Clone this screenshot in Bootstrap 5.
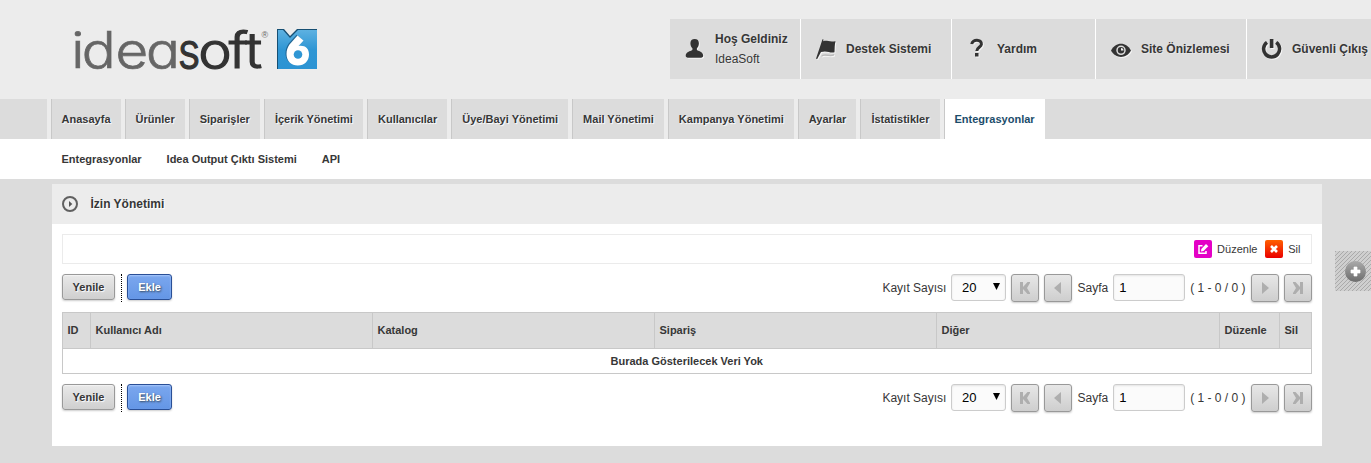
<!DOCTYPE html>
<html lang="tr">
<head>
<meta charset="utf-8">
<meta name="viewport" content="width=device-width, initial-scale=1">
<title>İzin Yönetimi - IdeaSoft</title>
<link rel="stylesheet" href="https://cdn.jsdelivr.net/npm/bootstrap@5.3.0/dist/css/bootstrap.min.css">
<style>
body{font-family:"Liberation Sans",Arial,sans-serif;font-size:12px;line-height:20px;color:#373737;background:#dcdcdc;height:463px;overflow:hidden}
a{color:inherit;text-decoration:none}
.masthead{height:99px;background:#ececec;padding:19px 0 0 60px}
.logo{width:280px;height:70px;margin-top:-4px}
.logo .word{font-family:Inter,sans-serif;font-weight:300;font-size:50px;font-feature-settings:"cv11";text-anchor:middle;stroke-width:.7}
.user-menu{width:701px;height:60px;background:#dcdcdc;overflow:hidden}
.user-item{border-right:1px solid #fff;font-weight:700;flex:none;padding-left:13px;text-shadow:1px 1px 0 #e8e8e8}
.user-item svg{width:24px;height:24px;margin-right:8px;flex:none;filter:drop-shadow(1px 1px 0 #f4f4f4)}
.w-a{width:131px}.w-b{width:151px}.w-c{width:144px}
.main-nav{height:40px;background:#ececec;font-size:11px;font-weight:700}
.main-nav .edge{background:#dcdcdc;width:46.6px}
.main-nav .tab-link{border-left:1px solid #c8c8c8;background:#dcdcdc;padding:10px 10.04px 10px 10px;margin-left:4px;text-shadow:1px 1px 1px #fff;white-space:nowrap}
.main-nav .tab-link.active{background:#fff;color:#1c4d6b}
.sub-nav{height:40px;background:#fff;font-size:11px;font-weight:700;padding-left:61.5px;gap:25px}
.page-area{padding:5px 0 0 52px}
.panel{width:1270px;height:262px;background:#fff}
.panel-title{height:40px;background:#ececec;padding-left:10px;font-weight:700;text-shadow:1px 1px 0 #fff}
.panel-title svg{margin-right:12.5px}
.panel-inner{padding:10px}
.legend-bar{height:30px;border:1px solid #ebebeb;margin-bottom:10px;font-size:11px;padding-right:10.5px}
.legend-bar svg{margin-right:5px}
.legend-bar .first-label{margin-right:7.8px}
.toolbar{height:28px;gap:5px}
.tool-btn{height:26px;border:1px solid #999;border-radius:3px;background:linear-gradient(#e9e9e9,#cfcfcf);font-size:11px;font-weight:700;line-height:24px;padding:0;text-align:center;color:#373737;text-shadow:1px 1px 1px #fff;box-shadow:0 1px 2px rgba(0,0,0,.2),inset 0 1px 1px #f3f3f3}
.refresh{width:53px}
.add{width:45px;border-color:#2a4f96;background:linear-gradient(#7ba7ee,#6496e6);color:#fff;text-shadow:1px 1px 2px #345;box-shadow:0 1px 2px rgba(0,0,0,.2),inset 0 1px 2px #a9c8fb}
.divider{border-left:1px dotted #000;height:28px;margin-left:1px}
.pager{gap:5px}
.lbl{line-height:28px}
.range{padding-right:.5px}
.page-btn{width:28px;height:28px;border:1px solid #999;border-radius:3px;background:linear-gradient(#e7e7e7,#cecece);padding:0;display:flex;align-items:center;justify-content:center;box-shadow:0 1px 2px rgba(0,0,0,.2)}
.page-btn svg{fill:#aeaeae}
.field{height:27px;border:1px solid #ccc;border-radius:3px;background:#fbfbfb;box-shadow:inset 0 1px 2px #e4e4e4;font-family:"Liberation Sans",Arial,sans-serif;font-size:13px;line-height:25px;color:#000;padding:0 5px}
.count{width:55px;padding:0 5px 0 9.500px}
.count svg{margin-bottom:2px}
.page-no{width:72px}
.data-grid{width:1250px;margin:10px 0;table-layout:fixed;border-collapse:collapse;font-size:11px}
.data-grid th,.data-grid td{border:1px solid #c8c8c8;padding:0 4.5px}
.data-grid th{height:36px;background:#dcdcdc;padding-bottom:2px}
.data-grid td{height:25px;font-weight:700;text-align:center;padding-right:5px}
.c-id{width:28px}.c-wide{width:282px}.c-other{width:283px}.c-edit{width:60px}.c-del{width:32px}
.side-tab{width:36px;height:40px;margin:67px 0 0 13px;padding-left:10px;background:repeating-linear-gradient(135deg,#aaa 0 1px,#cfcfcf 1px 2.83px)}
</style>
</head>
<body>
<header class="masthead d-flex justify-content-between">
  <svg class="logo" viewBox="0 0 280 70">
    <defs><linearGradient id="blue" x2="0" y2="1"><stop stop-color="#5db1e1"/><stop offset=".5" stop-color="#2f96d4"/><stop offset="1" stop-color="#2b93d3"/></linearGradient></defs>
    <text class="word" y="53" x="15.800 34.200 63.700 91.200" fill="#666" stroke="#666" transform="scale(1.13 1)">idea</text>
    <g fill="#333" stroke="#333"><text class="word" y="53" x="147.500" style="stroke-width:1.200" transform="scale(.875 1)">s</text>
    <text class="word" y="53" x="137.200 158 171.500" style="stroke-width:1.200" transform="scale(1.13 1)">oft</text></g>
    <text x="201.500" y="23" font-size="9" font-family="Liberation Sans" fill="#666">®</text>
    <path d="M217 14h7l6 7 7-7h20v40h-40z" fill="#164f73"/>
    <path d="M218 15h5l7 8 8-8h19v39h-39z" fill="url(#blue)"/>
    <path d="M237.500 20.500l6 5-5 6.500C245 31 249 34.500 249 39.500c0 6.500-4.500 11-11.200 11S226.500 46 226.500 39c0-4 1-6.500 3-9.500z" fill="#174f76" opacity=".7" transform="translate(-1 -.7)"/>
    <path d="M237.500 20.500l6 5-5 5.500C245 30 249 33.500 249 39.500c0 6.500-4.500 11-11.200 11S226.500 46 226.500 39c0-4 1-6.500 3-9.500z" fill="#fff"/><circle cx="238" cy="39.500" r="4.300" fill="#2f96d4"/>
  </svg>
  <nav class="user-menu d-flex">
    <a href="#" class="user-item w-a d-flex align-items-center"><svg viewBox="0 0 24 24" fill="#333"><path d="M11.700 2c2.700 0 4.200 1.600 4.200 4.200 0 2.800-1.200 4-2 5.100v1.700c2.200 1.300 6.300 1.900 6.300 5.700 0 1.500-1.500 2-3 2h-11.500c-1.500 0-3-.5-3-2 0-3.800 4.500-4.400 6.700-5.700v-1.700c-.8-1.100-2-2.300-2-5.100C7.400 3.600 9 2 11.700 2z"/></svg><span>Hoş Geldiniz<br><span class="fw-normal">IdeaSoft</span></span></a>
    <a href="#" class="user-item w-b d-flex align-items-center"><svg viewBox="0 0 24 24"><path d="M8 18c4-2 8 1 12-1v1.500c-4 2-8-1-13 1z" fill="#bbb"/><path d="M8.500 2.200l1 .4-.3 1.600c4-1.200 6 1.300 12.300 0-1 3.500-.7 7-1 11-4.500 1.500-7-2.200-13.500-.2L3.200 22l-1.200-.3z" fill="#333"/></svg>Destek Sistemi</a>
    <a href="#" class="user-item w-c d-flex align-items-center"><svg viewBox="0 0 24 24"><path d="M6.800 7.200C7.200 1.700 17 2 16.400 7.300c-.4 3-4.600 3-4.600 6.700" fill="none" stroke="#333" stroke-width="3"/><path d="M10 16h3.500v3.500H10z" fill="#333"/></svg>Yardım</a>
    <a href="#" class="user-item w-b d-flex align-items-center"><svg viewBox="0 0 24 24"><path d="M2 13.500c4.500-9 15.500-9 20 0-4.500 8.500-15.500 8.500-20 0z" fill="#333"/><circle cx="12" cy="13.300" r="4" fill="#333" stroke="#ddd" stroke-width="1.500"/><path d="M12 11v2.500h2.500a2.500 2.500 0 0 0-2.500-2.500" fill="#eee"/></svg>Site Önizlemesi</a>
    <a href="#" class="user-item w-b d-flex align-items-center text-nowrap"><svg viewBox="0 0 24 24" fill="none" stroke="#333"><path d="M7 5.400a8 8 0 1 0 9.200 0" stroke-width="3.500"/><path d="M11.600 2v9" stroke-width="3.600"/></svg>Güvenli Çıkış</a>
  </nav>
</header>
<nav class="main-nav d-flex">
  <span class="edge"></span>
  <a class="tab-link" href="#">Anasayfa</a><a class="tab-link" href="#">Ürünler</a><a class="tab-link" href="#">Siparişler</a><a class="tab-link" href="#">İçerik Yönetimi</a><a class="tab-link" href="#">Kullanıcılar</a><a class="tab-link" href="#">Üye/Bayi Yönetimi</a><a class="tab-link" href="#">Mail Yönetimi</a><a class="tab-link" href="#">Kampanya Yönetimi</a><a class="tab-link" href="#">Ayarlar</a><a class="tab-link" href="#">İstatistikler</a><a class="tab-link active" href="#">Entegrasyonlar</a>
  <span class="edge flex-grow-1"></span>
</nav>
<nav class="sub-nav d-flex align-items-center"><a href="#">Entegrasyonlar</a><a href="#">Idea Output Çıktı Sistemi</a><a href="#">API</a></nav>
<main class="page-area d-flex align-items-start">
  <section class="panel">
    <div class="panel-title d-flex align-items-center"><svg width="16" height="16" viewBox="0 0 16 16"><circle cx="8" cy="8" r="7" fill="none" stroke="#606060" stroke-width="2"/><path d="M7 5l3.300 3L7 11z" fill="#555"/></svg>İzin Yönetimi</div>
    <div class="panel-inner">
      <div class="legend-bar d-flex align-items-center justify-content-end">
        <svg width="18" height="18" viewBox="0 0 18 18"><rect width="18" height="18" rx="2" fill="#e400c6"/><path d="M8.500 5.700H5v7.600h7V11" fill="none" stroke="#fff" stroke-width="1.500"/><path d="M7.300 9L12 4l2.300 2.200L9.500 11 7 11.500z" fill="#fff"/></svg><span class="first-label">Düzenle</span>
        <svg width="18" height="18" viewBox="0 0 18 18"><defs><linearGradient id="hot" x2="0" y2="1"><stop stop-color="#ff6000"/><stop offset="1" stop-color="#ea0000"/></linearGradient></defs><rect width="18" height="18" rx="2" fill="url(#hot)"/><path d="M6 6l6 6M12 6l-6 6" stroke="#fff" stroke-width="2.600"/></svg><span>Sil</span>
      </div>
      <div class="toolbar d-flex align-items-start">
        <button class="tool-btn refresh">Yenile</button><span class="divider"></span><button class="tool-btn add">Ekle</button>
        <div class="pager d-flex ms-auto align-items-start"><span class="lbl">Kayıt Sayısı</span><span class="field count d-flex justify-content-between align-items-center">20<svg width="7" height="7" viewBox="0 0 7 7"><path d="M0 0h7L3.500 7z"/></svg></span>
          <button class="page-btn"><svg width="12" height="12"><path d="M1 0h3v5l4.500-5H11v1L8 6l3 5v1H8.500L4 7v5H1z"/></svg></button><button class="page-btn"><svg width="12" height="12"><path d="M9 0v12L2 6z"/></svg></button>
          <span class="lbl">Sayfa</span><input class="field page-no" value="1"><span class="lbl range">( 1 - 0 / 0 )</span>
          <button class="page-btn"><svg width="12" height="12"><path d="M3 0v12l7-6z"/></svg></button><button class="page-btn"><svg width="12" height="12"><path d="M11 0H8v5L3.500 0H1v1l3 5-3 5v1h2.500L8 7v5h3z"/></svg></button></div>
      </div>
      <table class="data-grid">
        <colgroup><col class="c-id"><col class="c-wide"><col class="c-wide"><col class="c-wide"><col class="c-other"><col class="c-edit"><col class="c-del"></colgroup>
        <thead><tr><th>ID</th><th>Kullanıcı Adı</th><th>Katalog</th><th>Sipariş</th><th>Diğer</th><th>Düzenle</th><th>Sil</th></tr></thead>
        <tbody><tr><td colspan="7">Burada Gösterilecek Veri Yok</td></tr></tbody>
      </table>
      <div class="toolbar d-flex align-items-start">
        <button class="tool-btn refresh">Yenile</button><span class="divider"></span><button class="tool-btn add">Ekle</button>
        <div class="pager d-flex ms-auto align-items-start"><span class="lbl">Kayıt Sayısı</span><span class="field count d-flex justify-content-between align-items-center">20<svg width="7" height="7" viewBox="0 0 7 7"><path d="M0 0h7L3.500 7z"/></svg></span>
          <button class="page-btn"><svg width="12" height="12"><path d="M1 0h3v5l4.500-5H11v1L8 6l3 5v1H8.500L4 7v5H1z"/></svg></button><button class="page-btn"><svg width="12" height="12"><path d="M9 0v12L2 6z"/></svg></button>
          <span class="lbl">Sayfa</span><input class="field page-no" value="1"><span class="lbl range">( 1 - 0 / 0 )</span>
          <button class="page-btn"><svg width="12" height="12"><path d="M3 0v12l7-6z"/></svg></button><button class="page-btn"><svg width="12" height="12"><path d="M11 0H8v5L3.500 0H1v1l3 5-3 5v1h2.500L8 7v5h3z"/></svg></button></div>
      </div>
    </div>
  </section>
  <aside class="side-tab d-flex align-items-center"><svg width="21" height="21" viewBox="0 0 21 21"><defs><linearGradient id="ball" x2="0" y2="1"><stop stop-color="#aaa"/><stop offset="1" stop-color="#6c6c6c"/></linearGradient></defs><circle cx="10.500" cy="10.500" r="10.500" fill="url(#ball)"/><path d="M9 6h3v3h3v3h-3v3H9v-3H6V9h3z" fill="#fff" stroke="#fff" stroke-width=".7"/></svg></aside>
</main>
<script src="https://cdn.jsdelivr.net/npm/bootstrap@5.3.0/dist/js/bootstrap.bundle.min.js"></script>
</body>
</html>
